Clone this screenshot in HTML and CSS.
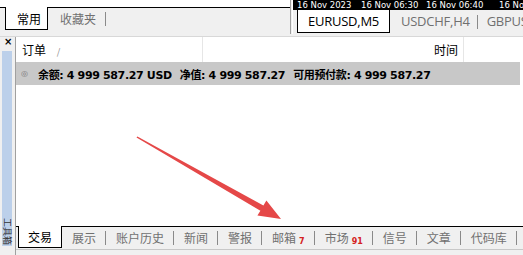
FILE: index.html
```html
<!DOCTYPE html>
<html>
<head>
<meta charset="utf-8">
<link rel="stylesheet" href="styles.css">
</head>
<body>
<div class="top">
  <div class="tl">
    <div class="tl-content"></div>
    <div class="strip strip-top">
      <div class="tab active t-chang">常用</div>
      <div class="tab">收藏夹</div>
      <div class="fill"></div>
    </div>
  </div>
  <div class="tr">
    <div class="chart">
      <span class="c1">16 Nov 2023</span>
      <span class="c2">16 Nov 06:30</span>
      <span class="c3">16 Nov 06:40</span>
      <span class="c4">16 Nov</span>
    </div>
    <div class="strip strip-sym">
      <div class="tab active t-eur">EURUSD,M5</div>
      <div class="tab t-usd">USDCHF,H4</div>
      <div class="tab t-gbp">GBPUSD,H1</div>
    </div>
  </div>
</div>
<div class="gap"></div>
<div class="toolbox">
  <div class="side">
    <div class="close">×</div>
    <div class="bar"><span class="vlabel">工具箱</span></div>
  </div>
  <div class="main">
    <div class="head">
      <div class="col col-order">订单 <span class="sort">/</span></div>
      <div class="col col-time">时间</div>
      <div class="col col-rest"></div>
    </div>
    <div class="summary">
      <span class="dot">◎</span>
      <span class="sumtext">余额: 4 999 587.27 USD<span class="sp"></span>净值: 4 999 587.27<span class="sp"></span>可用预付款: 4 999 587.27</span>
    </div>
    <div class="empty"></div>
    <div class="strip strip-bottom">
      <div class="tab active">交易</div>
      <div class="tab">展示</div>
      <div class="tab">账户历史</div>
      <div class="tab">新闻</div>
      <div class="tab">警报</div>
      <div class="tab">邮箱<span class="badge">7</span></div>
      <div class="tab">市场<span class="badge">91</span></div>
      <div class="tab">信号</div>
      <div class="tab">文章</div>
      <div class="tab">代码库</div>
      <div class="fill"></div>
    </div>
    <div class="foot"></div>
  </div>
</div>
<svg class="arrow" width="523" height="255" viewBox="0 0 523 255">
  <polygon fill="#e54848" points="136.5,137.6 137.4,136.4 263.4,205.5 266.4,200.6 281,219 257.4,215.6 260.4,210.7"/>
</svg>
</body>
</html>
```

FILE: styles.css
```css
* { box-sizing: border-box; }
html, body { margin: 0; padding: 0; }
body {
  width: 523px;
  height: 255px;
  overflow: hidden;
  background: #f0f0f0;
  font-family: "Noto Sans CJK SC", "Noto Sans", sans-serif;
  font-size: 12px;
  color: #000;
  position: relative;
}
.top {
  display: flex;
  height: 34px;
}
.tl {
  width: 291px;
  flex-shrink: 0;
  display: flex;
  flex-direction: column;
  border-right: 1px solid #a0a0a0;
}
.tl-content {
  height: 7px;
  background: #fff;
}
.strip {
  display: flex;
  align-items: flex-start;
  background: #f0f0f0;
}
.strip-top {
  height: 27px;
  padding-left: 5px;
  background: linear-gradient(#000, #000) no-repeat;
  background-size: 100% 1px;
  background-color: #f0f0f0;
}
.tab {
  height: 20px;
  line-height: 20px;
  padding: 0 10px;
  color: #707070;
  white-space: nowrap;
  position: relative;
  display: flex;
  align-items: center;
  flex-shrink: 0;
}
.tab:not(.active)::after {
  content: "";
  position: absolute;
  right: 0;
  top: 4px;
  height: 14px;
  border-right: 1px solid #8a8a8a;
}
.tab.active {
  background: #fff;
  color: #000;
  border: 1px solid #000;
  border-top: none;
  height: 23px;
  line-height: 22px;
  padding: 1px 10px 0 11px;
}
.strip-top .tab { height: 22px; margin-top: 1px; }
.strip-top .tab.active { height: 23px; margin-top: 0; width: 43px; }
.strip-top .tab:not(.active) { padding: 0 10px 0 12px; }
.fill { flex: 1; }
.tr {
  flex: 1;
  min-width: 0;
  overflow: hidden;
  display: flex;
  flex-direction: column;
  margin-left: 1px;
  border-left: 1px solid #fff;
}
.chart {
  height: 10px;
  background: #000;
  color: #fff;
  font-family: "DejaVu Sans", sans-serif;
  font-size: 8.5px;
  line-height: 10px;
  white-space: nowrap;
  overflow: hidden;
  display: flex;
  padding-left: 4px;
}
.chart span { display: block; flex-shrink: 0; }
.c1 { width: 64px; }
.c2 { width: 65px; }
.c3 { width: 73px; }
.strip-sym {
  padding-left: 4px;
  height: 24px;
  overflow: hidden;
}
.strip-sym .tab {
  font-family: "Open Sans", "Noto Sans", sans-serif;
  font-size: 13px;
  letter-spacing: -0.25px;
  height: 22px;
  margin-top: 0;
}
.strip-sym .tab.active {
  height: 23px;
  width: 93px;
  padding: 0 0 0 10px;
  color: #000;
}
.strip-sym .tab:not(.active)::after { top: 5px; }
.t-usd { padding: 0 8px 0 11px !important; }
.t-gbp { padding-left: 9px !important; }
.gap {
  height: 3px;
  border-bottom: 1px solid #d8d8d8;
  background: #f0f0f0;
}
.toolbox {
  display: flex;
  height: 218px;
}
.side {
  width: 16px;
  display: flex;
  flex-direction: column;
  border-right: 1px solid #a0a0a0;
  background: #f0f0f0;
}
.close {
  height: 14px;
  font-family: "DejaVu Sans", sans-serif;
  font-weight: bold;
  font-size: 10px;
  line-height: 10px;
  padding-left: 4px;
}
.bar {
  flex: 1;
  margin: 0 3px 9px 2px;
  background: #bcd0ea;
  display: flex;
  align-items: flex-end;
  justify-content: center;
}
.vlabel {
  writing-mode: vertical-rl;
  text-orientation: sideways;
  font-size: 9px;
  line-height: 10px;
  color: #333;
  margin-bottom: 1px;
}
.main {
  flex: 1;
  display: flex;
  flex-direction: column;
  background: #fff;
}
.head {
  display: flex;
  height: 25px;
  background: #fff;
}
.col {
  height: 25px;
  line-height: 25px;
  border-right: 1px solid #e6e6e6;
}
.col-order { width: 187px; padding-left: 6px; }
.sort { color: #888; font-size: 9px; margin-left: 8px; }
.col-time { width: 261px; text-align: right; padding-right: 5px; }
.col-rest { flex: 1; border: none; }
.summary {
  height: 23px;
  background: #c8c8c8;
  margin-right: 3px;
  display: flex;
  align-items: center;
  white-space: nowrap;
  padding-left: 5px;
}
.dot {
  font-family: "DejaVu Sans", sans-serif;
  font-size: 8px;
  color: #777;
  width: 17px;
}
.sumtext {
  font-family: "DejaVu Sans", "Noto Sans CJK SC", sans-serif;
  font-weight: bold;
  font-size: 11px;
  letter-spacing: -0.35px;
}
.sp { display: inline-block; width: 8px; }
.empty { flex: 1; background: #fff; }
.strip-bottom {
  height: 23px;
  padding-left: 2px;
  background: linear-gradient(#000, #000) no-repeat;
  background-size: 100% 1px;
  background-color: #f0f0f0;
}
.strip-bottom .tab { height: 22px; margin-top: 1px; }
.strip-bottom .tab.active { height: 22px; margin-top: 0; width: 44px; padding: 0 0 0 9px; }
.badge {
  color: #d42020;
  font-family: "DejaVu Sans", sans-serif;
  font-weight: bold;
  font-size: 8px;
  margin-left: 3px;
  margin-top: 8px;
  line-height: 8px;
}
.foot {
  height: 6px;
  border-top: 1px solid #c8c8c8;
  background: #f0f0f0;
}
.arrow {
  position: absolute;
  left: 0;
  top: 0;
  pointer-events: none;
}
```
